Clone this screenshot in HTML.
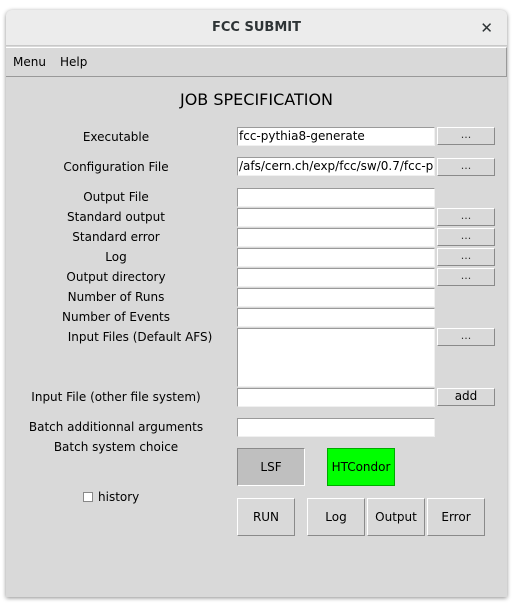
<!DOCTYPE html>
<html><head><meta charset="utf-8"><style>
*{margin:0;padding:0;box-sizing:border-box}
body{width:515px;height:605px;background:#fff;font-family:"DejaVu Sans",sans-serif;font-size:12px;color:#000;position:relative;overflow:hidden}
.win{position:absolute;left:6px;top:10px;width:501px;height:587px;background:#d9d9d9;border-radius:6px 6px 0 0;box-shadow:0 1px 4px rgba(0,0,0,.45);overflow:hidden}
.title{position:absolute;left:0;top:0;width:501px;height:36px;background:#ececec;border-bottom:1px solid #c8c8c8;text-align:center;line-height:36px;font-weight:bold;font-size:13px;color:#2e3436}
.x{position:absolute;right:14px;top:0;font-size:15px;font-weight:bold}
.menu{position:absolute;left:0;top:37px;width:501px;height:30px;background:#d9d9d9;border:1px solid #999;border-top-color:#fff;border-left:none;border-right:1px solid #999;}
.menu span{position:absolute;top:7px}
.a{position:absolute}
.l{position:absolute;text-align:center;width:220px;left:0px;line-height:14px;margin-top:1px}
.e{position:absolute;left:231px;width:198px;height:19px;background:#fff;border:1px solid;border-color:#9a9a9a #f0f0f0 #f0f0f0 #9a9a9a;padding-left:1px;line-height:17px;white-space:nowrap;overflow:hidden}
.b{position:absolute;left:431px;width:58px;height:18px;border:1px solid;border-color:#fff #8a8a8a #8a8a8a #fff;text-align:center;line-height:14px;font-size:11px;color:#333}
.bb{position:absolute;border:1px solid;border-color:#fff #8a8a8a #8a8a8a #fff;text-align:center;font-size:12px;line-height:36px;height:38px}
</style></head><body>
<div class="win">
<div class="title">FCC SUBMIT<span class="x">✕</span></div>
<div class="menu"><span style="left:7px">Menu</span><span style="left:54px">Help</span></div>
<div class="a" style="left:0;width:501px;top:80px;text-align:center;font-size:16px">JOB SPECIFICATION</div>

<div class="l" style="top:119px">Executable</div>
<div class="e" style="top:117px">fcc-pythia8-generate</div><div class="b" style="top:117px">...</div>
<div class="l" style="top:149px">Configuration File</div>
<div class="e" style="top:147px">/afs/cern.ch/exp/fcc/sw/0.7/fcc-p</div><div class="b" style="top:148px">...</div>

<div class="l" style="top:179px">Output File</div><div class="e" style="top:178px"></div>
<div class="l" style="top:199px">Standard output</div><div class="e" style="top:198px"></div><div class="b" style="top:198px">...</div>
<div class="l" style="top:219px">Standard error</div><div class="e" style="top:218px"></div><div class="b" style="top:218px">...</div>
<div class="l" style="top:239px">Log</div><div class="e" style="top:238px"></div><div class="b" style="top:238px">...</div>
<div class="l" style="top:259px">Output directory</div><div class="e" style="top:258px"></div><div class="b" style="top:258px">...</div>
<div class="l" style="top:279px">Number of Runs</div><div class="e" style="top:278px"></div>
<div class="l" style="top:299px">Number of Events</div><div class="e" style="top:298px"></div>
<div class="l" style="top:319px;left:24px">Input Files (Default AFS)</div><div class="e" style="top:318px;height:59px"></div><div class="b" style="top:318px">...</div>
<div class="l" style="top:379px">Input File (other file system)</div><div class="e" style="top:378px"></div><div class="b" style="top:378px;font-size:12px;color:#000">add</div>
<div class="l" style="top:409px">Batch additionnal arguments</div><div class="e" style="top:408px"></div>
<div class="l" style="top:429px">Batch system choice</div>

<div class="bb" style="left:231px;top:438px;width:68px;background:#bfbfbf;border-color:#8a8a8a #fff #fff #8a8a8a">LSF</div>
<div class="bb" style="left:321px;top:438px;width:68px;background:#00ff00;border-color:#0a0">HTCondor</div>

<div class="a" style="left:77px;top:482px;width:10px;height:10px;background:#fff;border:1px solid #888"></div>
<div class="a" style="left:92px;top:480px">history</div>

<div class="bb" style="left:231px;top:488px;width:58px">RUN</div>
<div class="bb" style="left:301px;top:488px;width:58px">Log</div>
<div class="bb" style="left:361px;top:488px;width:58px">Output</div>
<div class="bb" style="left:421px;top:488px;width:58px">Error</div>
</div>
</body></html>
